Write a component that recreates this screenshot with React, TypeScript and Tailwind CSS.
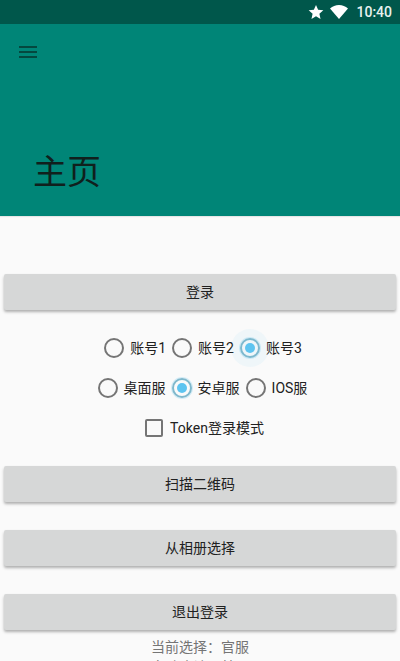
const font = "font-['Roboto','Noto_Sans_CJK_SC',sans-serif]";

function Radio({ label, checked, halo }: { label: string; checked?: boolean; halo?: boolean }) {
  return (
    <div className="flex items-center gap-[6px]">
      <span
        className={`relative flex h-5 w-5 items-center justify-center rounded-full border-2 ${
          checked ? "border-[#7fb8cc] shadow-[0_0_0_1px_rgba(94,196,240,0.25)]" : "border-[#757575]"
        }`}
      >
        {halo && <span className="absolute -inset-[11px] rounded-full bg-[#5ec4f0]/[0.07]" />}
        {checked && <span className="relative h-[10px] w-[10px] rounded-full bg-[#5ec4f0]" />}
      </span>
      <span className="relative text-sm leading-5 text-[#212121]">{label}</span>
    </div>
  );
}

function Btn({ label }: { label: string }) {
  return (
    <button className="h-9 w-full rounded-[2px] bg-[#d6d7d7] text-sm text-[#212121] shadow-[0_2px_3px_rgba(0,0,0,0.3)]">
      {label}
    </button>
  );
}

export default function App() {
  return (
    <div className={`flex h-[661px] w-[400px] flex-col overflow-hidden bg-[#fafafa] ${font}`}>
      <div className="flex h-6 shrink-0 items-center justify-end bg-[#00574b] pr-2 text-sm font-medium text-[#e8f2f0]">
        <svg viewBox="0 0 24 24" className="h-[16px] w-[16px]">
          <path d="M12 1.500l3.200 7.200 7.800.8-5.900 5.200 1.700 7.700L12 18.400l-6.800 4 1.700-7.700L1 9.500l7.800-.8z" fill="white" />
        </svg>
        <svg viewBox="0 0 18 14" className="ml-[6px] h-[14px] w-[18px]">
          <path d="M0 3.500C2.500 1.300 5.600 0 9 0s6.500 1.300 9 3.500L9 14z" fill="white" />
        </svg>
        <span className="ml-2">10:40</span>
      </div>

      <div className="flex h-[192px] shrink-0 flex-col bg-[#008577] shadow-[0_1px_1px_rgba(0,0,0,0.08)]">
        <div className="ml-[19px] mt-[22px] flex w-[18px] flex-col gap-[3px]">
          <span className="h-[2px] bg-[#04483f]" />
          <span className="h-[2px] bg-[#04483f]" />
          <span className="h-[2px] bg-[#04483f]" />
        </div>
        <h1 className="ml-[33px] mt-[92px] text-[34px] leading-[44px] text-[#10201d]">主页</h1>
      </div>

      <div className="flex flex-col px-1 pt-[58px]">
        <Btn label="登录" />

        <div className="mt-[28px] ml-[6px] flex h-5 items-center justify-center gap-[6px]">
          <Radio label="账号1" />
          <Radio label="账号2" />
          <Radio label="账号3" checked halo />
        </div>
        <div className="mt-5 ml-[5px] flex h-5 items-center justify-center gap-[6px]">
          <Radio label="桌面服" />
          <Radio label="安卓服" checked />
          <Radio label="IOS服" />
        </div>
        <div className="mt-5 ml-[9px] flex h-5 items-center justify-center gap-[7px]">
          <span className="h-[18px] w-[18px] rounded-[2px] border-2 border-[#757575]" />
          <span className="text-sm leading-5 text-[#212121]">Token登录模式</span>
        </div>

        <div className="mt-[28px] flex flex-col gap-7">
          <Btn label="扫描二维码" />
          <Btn label="从相册选择" />
          <Btn label="退出登录" />
        </div>

        <div className="mt-[7px] flex flex-col items-center text-sm leading-5 text-[#757575]">
          <span>当前选择：官服</span>
          <span>自动确认：禁用</span>
        </div>
      </div>
    </div>
  );
}
